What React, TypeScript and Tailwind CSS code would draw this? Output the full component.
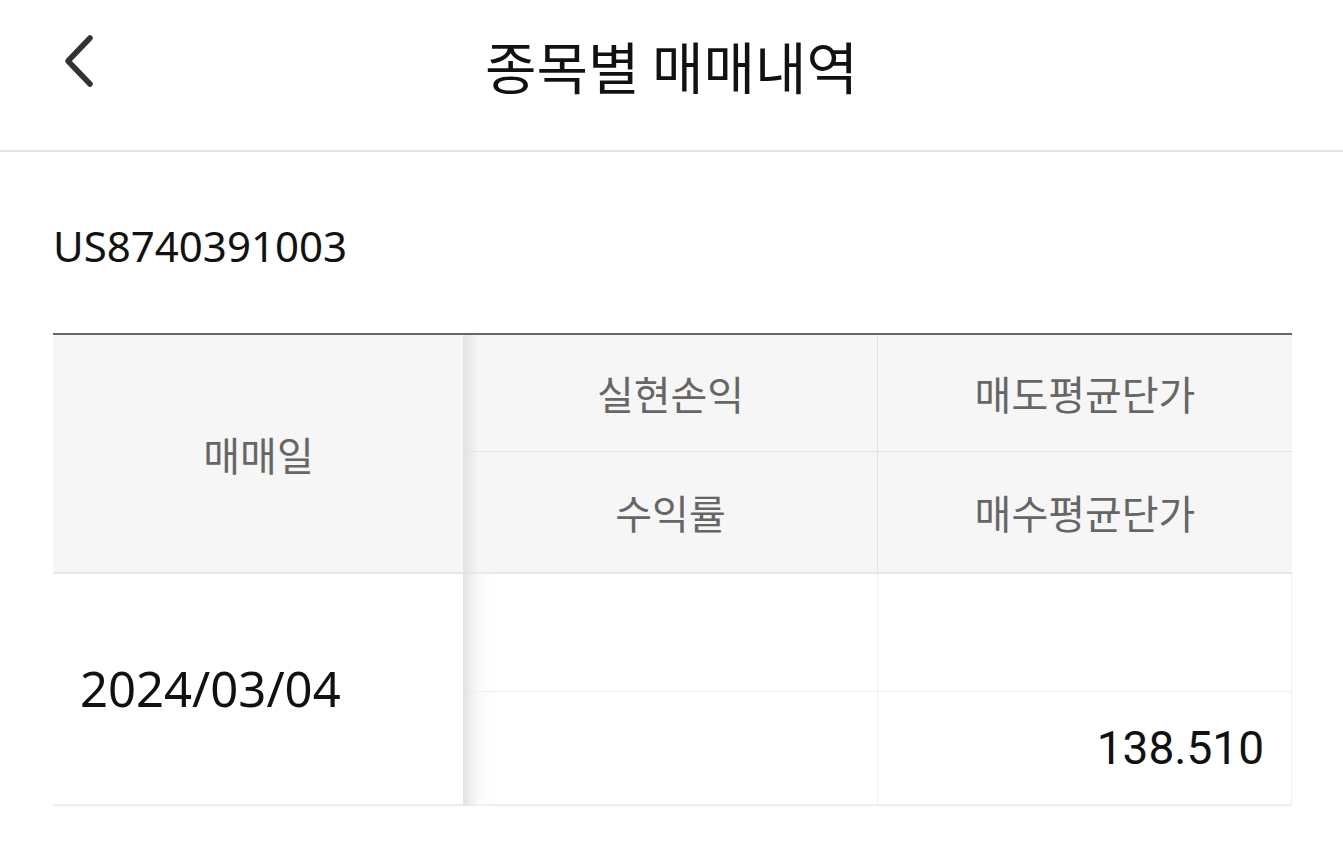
import React from 'react'

const kr = "font-['Noto_Sans_CJK_KR',sans-serif]"
const latin = "font-['Noto_Sans','Noto_Sans_CJK_KR',sans-serif]"

function BackIcon() {
  return (
    <svg width="40" height="60" viewBox="0 0 40 60" fill="none">
      <path
        d="M30 8 L8 31 L30 54"
        stroke="#333"
        strokeWidth="5.5"
        strokeLinecap="round"
        strokeLinejoin="round"
      />
    </svg>
  )
}

function HeadCell({ children, className = '' }: { children: React.ReactNode; className?: string }) {
  return (
    <div className={`flex items-center justify-center text-[40px] text-[#666] ${kr} ${className}`}>
      {children}
    </div>
  )
}

export default function App() {
  return (
    <div className="min-h-[851px] w-full bg-white">
      {/* Top bar */}
      <div className="relative flex h-[152px] items-center justify-center border-b-2 border-[#e3e3e3]">
        <button className="absolute left-[60px] top-[30px]">
          <BackIcon />
        </button>
        <h1 className={`pb-[20px] text-[56px] font-normal text-[#111] ${kr}`}>
          종목별 매매내역
        </h1>
      </div>

      <div className="pl-[53px] pr-[51px]">
        <div className={`flex h-[181px] items-center pt-[6px] text-[42px] text-[#111] ${latin}`}>
          US8740391003
        </div>

        {/* Table */}
        <div className="relative border-t-2 border-[#666]">
          {/* Header */}
          <div className="flex border-b-2 border-[#e6e6e6] bg-[#f6f6f6]">
            <HeadCell className="h-[237px] w-[411px]">매매일</HeadCell>
            <div className="grid flex-1 grid-cols-2 grid-rows-[117px_120px]">
              <HeadCell className="border-b border-r border-[#e2e2e2]">실현손익</HeadCell>
              <HeadCell className="border-b border-[#e2e2e2]">매도평균단가</HeadCell>
              <HeadCell className="border-r border-[#e2e2e2]">수익률</HeadCell>
              <HeadCell>매수평균단가</HeadCell>
            </div>
          </div>

          {/* Body */}
          <div className="flex border-b-2 border-[#eeeeee] bg-white">
            <div className={`flex h-[230px] w-[411px] items-center pl-[27px] text-[49px] text-[#111] ${latin}`}>
              2024/03/04
            </div>
            <div className="grid flex-1 grid-cols-2 grid-rows-[118px_112px] border-r border-[#efefef]">
              <div className="border-b border-r border-[#efefef]" />
              <div className="border-b border-[#efefef]" />
              <div className="border-r border-[#efefef]" />
              <div className="flex items-center justify-end pr-[27px] font-['Roboto',sans-serif] text-[46px] text-[#111]">
                138.510
              </div>
            </div>
          </div>

          {/* fixed column shadow */}
          <div className="pointer-events-none absolute bottom-0 left-[410px] top-0 w-[30px] bg-gradient-to-r from-[#e2e2e2] via-[#f3f3f3]/40 to-transparent" />
        </div>
      </div>
    </div>
  )
}
